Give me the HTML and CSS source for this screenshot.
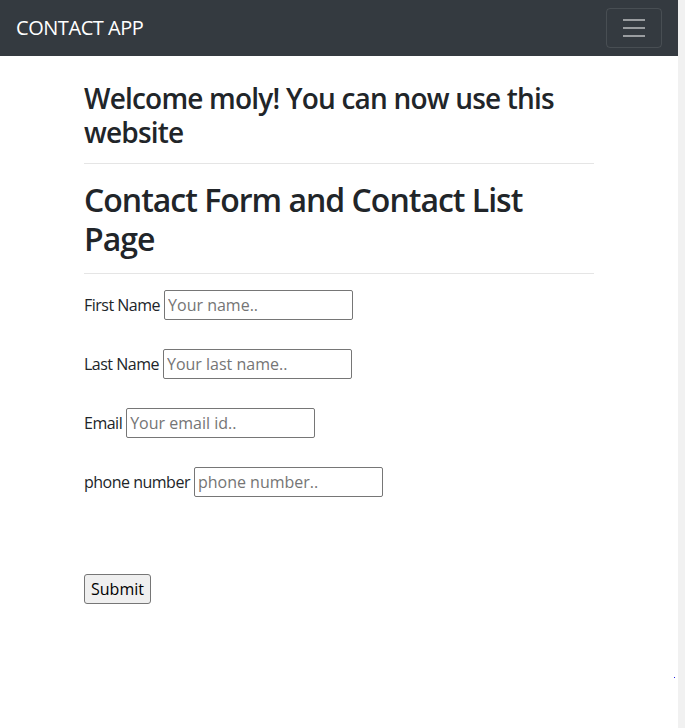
FILE: index.html
```html
<!DOCTYPE html>
<html lang="en">
<head>
<meta charset="utf-8">
<title>Contact App</title>
<link rel="stylesheet" href="styles.css">
</head>
<body>
<div class="layout">
  <div class="page">
    <nav class="navbar">
      <span class="brand">CONTACT APP</span>
      <button class="toggler" type="button" aria-label="Toggle navigation">
        <svg class="toggler-icon" width="30" height="30" viewBox="0 0 30 30"><path stroke="rgba(255,255,255,0.5)" stroke-width="2" stroke-miterlimit="10" d="M4 7h22M4 15h22M4 23h22"/></svg>
      </button>
    </nav>
    <main class="container">
      <h3 class="welcome">Welcome moly! You can now use this website</h3>
      <hr class="rule">
      <h2 class="title">Contact Form and Contact List Page</h2>
      <hr class="rule">
      <form class="form">
        <div class="row"><label>First Name</label><input type="text" placeholder="Your name.."></div>
        <div class="row"><label>Last Name</label><input type="text" placeholder="Your last name.."></div>
        <div class="row"><label>Email</label><input type="text" placeholder="Your email id.."></div>
        <div class="row"><label>phone number</label><input type="text" placeholder="phone number.."></div>
        <div class="actions"><button type="submit" class="submit">Submit</button></div>
      </form>
    </main>
  </div>
  <div class="scrolltrack"><span class="dot"></span></div>
</div>
</body>
</html>
```
FILE: styles.css
```css
* { box-sizing: border-box; }
html, body { margin: 0; height: 100%; }
body {
  font-family: "Open Sans", "Noto Sans", sans-serif;
  font-size: 16px;
  line-height: 1.5;
  letter-spacing: -0.5px;
  color: #212529;
  background: #fff;
}
.layout { display: flex; min-height: 728px; }
.page { flex: 1; }
.scrolltrack { width: 7px; background: #f1f1f1; position: relative; }
.dot { position: absolute; left: -4px; top: 677px; width: 1px; height: 1px; background: #2020e0; }
.navbar {
  height: 56px;
  background: #343a40;
  display: flex;
  align-items: center;
  justify-content: space-between;
  padding: 8px 16px;
}
.brand { color: #fff; font-size: 20px; line-height: 30px; letter-spacing: -0.45px; }
.toggler {
  width: 56px; height: 40px;
  padding: 4px 12px;
  background: transparent;
  border: 1px solid rgba(255,255,255,0.1);
  border-radius: 4px;
  display: flex; align-items: center; justify-content: center;
}
.toggler-icon { display: block; }
.container { width: 540px; margin: 0 auto; padding: 24px 15px 0; }
.welcome { font-size: 28px; font-weight: 600; line-height: 1.2; letter-spacing: -0.8px; margin: 0 0 8px; padding-top: 2px; }
.title { font-size: 32px; font-weight: 600; line-height: 1.2; letter-spacing: -1px; margin: 0 0 8px; padding-top: 1px; }
.rule { border: 0; border-top: 1px solid rgba(0,0,0,0.1); margin: 14px 0 16px; height: 0; }
.title + .rule { margin-top: 15px; }
.form { display: flex; flex-direction: column; gap: 29px; }
.row { display: flex; align-items: center; height: 30px; }
.row label { margin-right: 4px; }
.row input {
  width: 189px; height: 30px;
  font: inherit; color: #212529;
  padding: 1px 3px;
  border: 1px solid #767676;
  border-radius: 2px;
}
.row input::placeholder { color: #757575; }
.actions { margin-top: 48px; }
.submit {
  font: inherit; color: #000;
  height: 30px;
  padding: 1px 6px;
  background: #efefef;
  border: 1px solid #767676;
  border-radius: 3px;
}
```
